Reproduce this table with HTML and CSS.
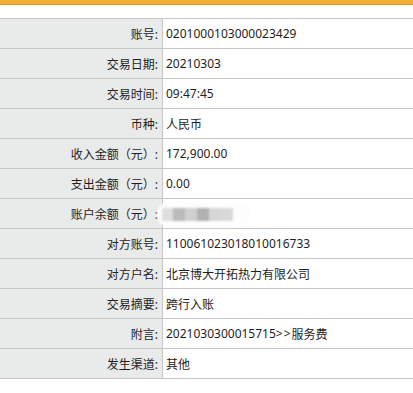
FILE: index.html
```html
<!DOCTYPE html>
<html>
<head>
<meta charset="utf-8">
<link rel="stylesheet" href="styles.css">
</head>
<body>
<div class="topbar"></div>
<div class="detail">
  <div class="row"><div class="label">账号:</div><div class="value">0201000103000023429</div></div>
  <div class="row"><div class="label">交易日期:</div><div class="value">20210303</div></div>
  <div class="row"><div class="label">交易时间:</div><div class="value">09:47:45</div></div>
  <div class="row"><div class="label">币种:</div><div class="value">人民币</div></div>
  <div class="row"><div class="label">收入金额（元）:</div><div class="value">172,900.00</div></div>
  <div class="row"><div class="label">支出金额（元）:</div><div class="value">0.00</div></div>
  <div class="row"><div class="label">账户余额（元）:</div><div class="value masked">
    <div class="mosaic">
      <span class="px p1"></span><span class="px p2"></span><span class="px p3"></span><span class="px p4"></span><span class="px p5"></span><span class="px p6"></span>
    </div>
  </div></div>
  <div class="row"><div class="label">对方账号:</div><div class="value">110061023018010016733</div></div>
  <div class="row"><div class="label">对方户名:</div><div class="value">北京博大开拓热力有限公司</div></div>
  <div class="row"><div class="label">交易摘要:</div><div class="value">跨行入账</div></div>
  <div class="row"><div class="label">附言:</div><div class="value">2021030300015715<span class="gt">&gt;&gt;</span>服务费</div></div>
  <div class="row"><div class="label">发生渠道:</div><div class="value">其他</div></div>
</div>
</body>
</html>
```
FILE: styles.css
```css
html, body {
  margin: 0;
  padding: 0;
  background: #ffffff;
}
body {
  font-family: "Noto Sans", "Noto Sans CJK SC", sans-serif;
  font-size: 12px;
  color: #1e1e1e;
}
.topbar {
  height: 5px;
  background: #f6ab33;
  border-bottom: 1px solid #e49a26;
  box-sizing: border-box;
}
.detail {
  margin-top: 13px;
  border-bottom: 1px solid #c6c6c6;
}
.row {
  display: flex;
  height: 29px;
  border-top: 1px solid #c6c6c6;
}
.label {
  width: 158px;
  padding-right: 4px;
  background: #e9eaea;
  border-right: 1px solid #c6c6c6;
  text-align: right;
  display: flex;
  align-items: center;
  justify-content: flex-end;
  flex-shrink: 0;
}
.value {
  flex: 1;
  padding-left: 3px;
  display: flex;
  align-items: center;
}
.gt {
  letter-spacing: 1px;
}
.masked {
  position: relative;
}
.mosaic {
  position: absolute;
  left: -6px;
  top: 3px;
  width: 93px;
  height: 25px;
  background: #fdfdfd;
  border-radius: 12px;
  display: flex;
  align-items: center;
  padding-left: 5px;
  box-sizing: border-box;
  filter: blur(1.2px);
}
.px {
  width: 12px;
  height: 13px;
}
.p1 { background: #dedede; width: 11px; }
.p2 { background: #bababa; }
.p3 { background: #d0d0d0; }
.p4 { background: #b2b2b2; }
.p5 { background: #d6d6d6; }
.p6 { background: #d9d9d9; }
```
